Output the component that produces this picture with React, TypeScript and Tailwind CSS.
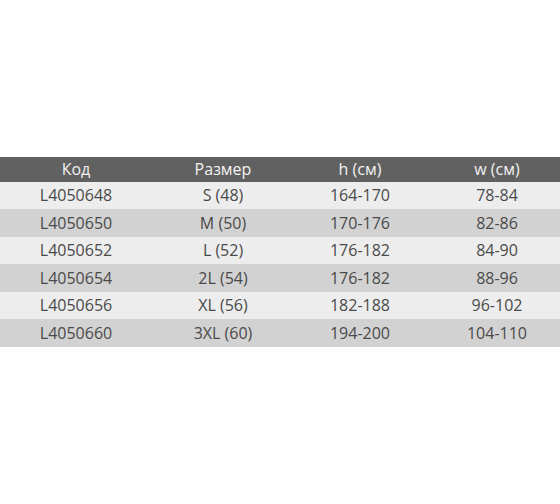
import React from "react";

const rows = [
  ["L4050648", "S (48)", "164-170", "78-84"],
  ["L4050650", "M (50)", "170-176", "82-86"],
  ["L4050652", "L (52)", "176-182", "84-90"],
  ["L4050654", "2L (54)", "176-182", "88-96"],
  ["L4050656", "XL (56)", "182-188", "96-102"],
  ["L4050660", "3XL (60)", "194-200", "104-110"],
];

function Row({ cells, className, textClass }: { cells: string[]; className: string; textClass: string }) {
  return (
    <div className={`flex items-center ${className}`}>
      <div className={`w-[152px] text-center ${textClass}`}>{cells[0]}</div>
      <div className={`w-[142px] text-center ${textClass}`}>{cells[1]}</div>
      <div className={`w-[132px] text-center ${textClass}`}>{cells[2]}</div>
      <div className={`w-[134px] pl-[8px] text-center ${textClass}`}>{cells[3]}</div>
    </div>
  );
}

export default function App() {
  return (
    <div className="w-[560px] h-[504px] bg-white pt-[157px] font-['Open_Sans',sans-serif] text-[16px]">
      <Row cells={["Код", "Размер", "h (см)", "w (см)"]} className="h-[25px] bg-[#616161]" textClass="text-[#f2f2f2] leading-[25px]" />
      {rows.map((r, i) => (
        <Row
          key={i}
          cells={r}
          className={`${i % 2 === 0 ? "h-[27px] bg-[#ededed]" : "h-[28px] bg-[#d2d2d2]"}`}
          textClass="text-[#4a4a4a] leading-[27px]"
        />
      ))}
    </div>
  );
}
